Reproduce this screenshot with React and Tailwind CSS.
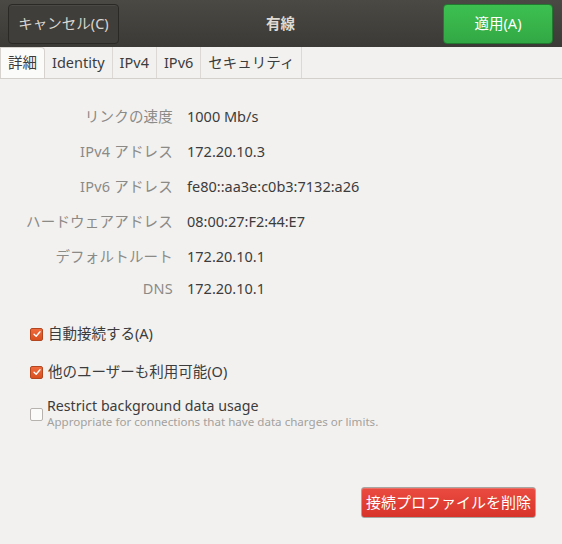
const font = { fontFamily: '"Noto Sans", "Noto Sans CJK JP", sans-serif' };

const details = [
  { label: "リンクの速度", value: "1000 Mb/s" },
  { label: "IPv4 アドレス", value: "172.20.10.3" },
  { label: "IPv6 アドレス", value: "fe80::aa3e:c0b3:7132:a26" },
  { label: "ハードウェアアドレス", value: "08:00:27:F2:44:E7" },
  { label: "デフォルトルート", value: "172.20.10.1" },
  { label: "DNS", value: "172.20.10.1" },
];

const tabs = ["詳細", "Identity", "IPv4", "IPv6", "セキュリティ"];

function Check({ checked }) {
  if (!checked) {
    return <span className="w-[13px] h-[13px] rounded-[2px] border border-[#b6b3ae] bg-[#fbfbfa] shrink-0" />;
  }
  return (
    <span className="w-[13px] h-[13px] rounded-[2px] border border-[#b3461e] bg-gradient-to-b from-[#ef6a3c] to-[#d8501f] flex items-center justify-center shrink-0">
      <svg viewBox="0 0 12 12" className="w-[10px] h-[10px]">
        <path d="M2.5 6.3 L5 8.6 L9.6 3.4" fill="none" stroke="#fff" strokeWidth="1.7" strokeLinecap="round" strokeLinejoin="round" />
      </svg>
    </span>
  );
}

export default function App() {
  return (
    <div style={font} className="w-[562px] h-[544px] bg-[#f2f1f0] flex flex-col overflow-hidden">
      {/* header bar */}
      <div className="h-[47px] shrink-0 bg-gradient-to-b from-[#4b4944] to-[#3b3a36] grid grid-cols-[1fr_auto_1fr] items-center pl-2 pr-[9px]">
        <div>
          <button className="w-[111px] h-[40px] rounded-[4px] border border-[#2a2926] bg-[#403e3a] text-[#d8d5cf] text-[14.5px] shadow-[inset_0_1px_0_rgba(255,255,255,0.06)]">
            キャンセル(C)
          </button>
        </div>
        <div className="text-[#dfdbd2] text-[14.5px] font-bold">有線</div>
        <div className="flex justify-end">
          <button className="w-[110px] h-[40px] rounded-[4px] border border-[#217a2f] bg-gradient-to-b from-[#3dc050] to-[#32a845] text-white text-[14.5px]">
            適用(A)
          </button>
        </div>
      </div>

      {/* tabs */}
      <div className="h-[32px] shrink-0 flex items-end border-b border-[#d3cfcb]">
        {tabs.map((t, i) => (
          <div
            key={t}
            className={
              i === 0
                ? "h-[31px] w-[45px] flex items-center justify-center bg-[#fbfbfa] border border-b-0 border-[#d6d2ce] rounded-tr-[4px] text-[#3c3c3c] text-[14.5px]"
                : "h-[31px] px-[7px] flex items-center border-r border-[#dcd8d4] text-[#3c3c3c] text-[14.5px]"
            }
          >
            {t}
          </div>
        ))}
      </div>

      {/* details */}
      <div className="grid grid-cols-[173px_1fr] gap-x-[14px] gap-y-[11px] pt-[25px] text-[14.5px] leading-[24px]">
        {details.map((d, i) => (
          <div key={d.label} className="contents">
            <div className={`text-right text-[#8b8a86] tracking-[0.2px] ${i === 5 ? "-mt-[3px]" : ""}`}>{d.label}</div>
            <div className={`text-[#3c3c3c] ${i === 5 ? "-mt-[3px]" : ""}`}>{d.value}</div>
          </div>
        ))}
      </div>

      {/* options */}
      <div className="flex flex-col pl-[30px] pt-[22px] text-[14.5px] text-[#3c3c3c]">
        <label className="flex items-center gap-[5px] h-[24px]">
          <Check checked />
          <span>自動接続する(A)</span>
        </label>
        <label className="flex items-center gap-[5px] h-[24px] mt-[14px]">
          <Check checked />
          <span>他のユーザーも利用可能(O)</span>
        </label>
        <label className="flex items-start gap-[4px] mt-[12px]">
          <span className="mt-[12px] flex"><Check /></span>
          <span className="flex flex-col">
            <span className="leading-[20px] text-[14.2px]">Restrict background data usage</span>
            <span className="text-[11.6px] leading-[12px] text-[#a3a19d]">Appropriate for connections that have data charges or limits.</span>
          </span>
        </label>
      </div>

      <div className="flex-1" />

      <div className="flex justify-end pr-[26px] pb-[26px]">
        <button className="w-[175px] h-[31px] rounded-[3px] border border-[#a8a6a3] bg-gradient-to-b from-[#ea4b40] to-[#d8332a] text-white text-[15px] shadow-[inset_0_1px_0_rgba(255,255,255,0.2)]">
          接続プロファイルを削除
        </button>
      </div>
    </div>
  );
}
